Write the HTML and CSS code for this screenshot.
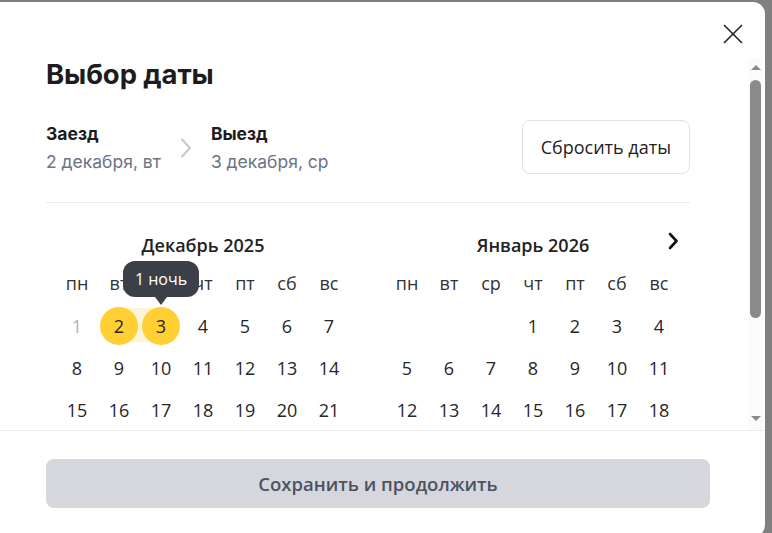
FILE: index.html
```html
<!DOCTYPE html>
<html lang="ru">
<head>
<meta charset="utf-8">
<title>Выбор даты</title>
<link rel="stylesheet" href="styles.css">
</head>
<body>
<div class="modal">
  <div class="modal-head">
    <button class="close" aria-label="Закрыть">
      <svg width="20" height="20" viewBox="0 0 20 20"><path d="M1 1L19 19M19 1L1 19" stroke="#222" stroke-width="1.6" fill="none"/></svg>
    </button>
  </div>
  <div class="scroll">
    <div class="scroll-content">
      <h1 class="title">Выбор даты</h1>
      <div class="dates-row">
        <div class="date-block">
          <div class="date-label">Заезд</div>
          <div class="date-value">2 декабря, вт</div>
        </div>
        <svg class="date-chevron" width="12" height="20" viewBox="0 0 12 20"><path d="M2 1.5L10 10L2 18.5" stroke="#c3c7ce" stroke-width="2" fill="none" stroke-linecap="round" stroke-linejoin="round"/></svg>
        <div class="date-block">
          <div class="date-label">Выезд</div>
          <div class="date-value">3 декабря, ср</div>
        </div>
        <button class="reset">Сбросить даты</button>
      </div>
      <div class="divider"></div>
      <div class="months">
        <div class="month">
          <div class="month-head"><span></span><span class="month-name">Декабрь 2025</span><span></span></div>
          <div class="days">
            <span class="wd">пн</span><span class="wd">вт</span><span class="wd">ср</span><span class="wd">чт</span><span class="wd">пт</span><span class="wd">сб</span><span class="wd">вс</span>
            <span class="day past">1</span>
            <span class="day range-start"><span class="sel">2</span></span>
            <span class="day range-end"><span class="sel">3</span><span class="tip">1 ночь</span></span>
            <span class="day">4</span><span class="day">5</span><span class="day">6</span><span class="day">7</span>
            <span class="day">8</span><span class="day">9</span><span class="day">10</span><span class="day">11</span><span class="day">12</span><span class="day">13</span><span class="day">14</span>
            <span class="day">15</span><span class="day">16</span><span class="day">17</span><span class="day">18</span><span class="day">19</span><span class="day">20</span><span class="day">21</span>
            <span class="day">22</span><span class="day">23</span><span class="day">24</span><span class="day">25</span><span class="day">26</span><span class="day">27</span><span class="day">28</span>
            <span class="day">29</span><span class="day">30</span><span class="day">31</span>
          </div>
        </div>
        <div class="month">
          <div class="month-head"><span></span><span class="month-name">Январь 2026</span>
            <svg class="next" width="12" height="18" viewBox="0 0 12 18"><path d="M3 2L9.5 9L3 16" stroke="#111" stroke-width="2.6" fill="none" stroke-linecap="round" stroke-linejoin="round"/></svg>
          </div>
          <div class="days">
            <span class="wd">пн</span><span class="wd">вт</span><span class="wd">ср</span><span class="wd">чт</span><span class="wd">пт</span><span class="wd">сб</span><span class="wd">вс</span>
            <span class="day"></span><span class="day"></span><span class="day"></span>
            <span class="day">1</span><span class="day">2</span><span class="day">3</span><span class="day">4</span>
            <span class="day">5</span><span class="day">6</span><span class="day">7</span><span class="day">8</span><span class="day">9</span><span class="day">10</span><span class="day">11</span>
            <span class="day">12</span><span class="day">13</span><span class="day">14</span><span class="day">15</span><span class="day">16</span><span class="day">17</span><span class="day">18</span>
            <span class="day">19</span><span class="day">20</span><span class="day">21</span><span class="day">22</span><span class="day">23</span><span class="day">24</span><span class="day">25</span>
            <span class="day">26</span><span class="day">27</span><span class="day">28</span><span class="day">29</span><span class="day">30</span><span class="day">31</span>
          </div>
        </div>
      </div>
    </div>
    <div class="scrollbar">
      <div class="sb-btn"><span class="tri-up"></span></div>
      <div class="sb-thumb"></div>
      <div class="sb-track"></div>
      <div class="sb-btn"><span class="tri-down"></span></div>
    </div>
  </div>
  <div class="footer">
    <button class="save">Сохранить и продолжить</button>
  </div>
</div>
</body>
</html>
```
FILE: styles.css
```css
* { box-sizing: border-box; }
html, body { margin: 0; padding: 0; }
body {
  background: #808080;
  width: 772px;
  height: 533px;
  overflow: hidden;
  font-family: "Open Sans", "Liberation Sans", sans-serif;
  color: #222;
}
button { font-family: inherit; cursor: pointer; }

.modal {
  margin-top: 2px;
  width: 765px;
  height: 535px;
  background: #fff;
  border-radius: 0 12px 12px 0;
  display: flex;
  flex-direction: column;
  overflow: hidden;
}

.modal-head {
  height: 56px;
  flex: none;
  display: flex;
  justify-content: flex-end;
  align-items: flex-start;
  padding: 22px 22px 0 0;
}
.close {
  border: 0;
  background: none;
  padding: 0;
  width: 20px;
  height: 20px;
  display: block;
}
.close svg { display: block; }

.scroll {
  height: 373px;
  flex: none;
  display: flex;
  border-bottom: 1px solid #ececec;
}
.scroll-content {
  flex: 1;
  overflow: hidden;
  padding: 0 58px 0 46px;
}

.title {
  margin: 0;
  font-family: Inter, "Noto Sans", sans-serif;
  font-weight: 700;
  font-size: 27.5px;
  line-height: 32px;
  color: #1c1c1e;
  letter-spacing: -0.1px;
}

.dates-row {
  margin-top: 30px;
  display: flex;
  align-items: center;
  height: 54px;
}
.date-block { display: flex; flex-direction: column; padding-top: 1px; }
.date-label {
  font-family: Inter, "Noto Sans", sans-serif;
  font-weight: 700;
  font-size: 17.5px;
  line-height: 24px;
  color: #1c1c1e;
}
.date-value {
  font-family: Inter, "Noto Sans", sans-serif;
  font-weight: 400;
  font-size: 17.5px;
  line-height: 24px;
  margin-top: 4px;
  color: #6b7384;
}
.date-chevron { margin: 2px 19px 0 19px; flex: none; }
.reset {
  margin-left: auto;
  height: 54px;
  padding: 0 18px;
  border: 1px solid #dfe1e5;
  border-radius: 8px;
  background: #fff;
  font-size: 18px;
  color: #222;
}

.divider {
  margin-top: 28px;
  height: 1px;
  background: #ebebeb;
}

.months {
  margin-top: 30px;
  display: flex;
  justify-content: space-between;
  padding: 0 10px;
}
.month { width: 294px; }
.month-head {
  height: 29px;
  display: grid;
  grid-template-columns: 1fr auto 1fr;
  align-items: start;
}
.month-name {
  font-size: 18px;
  line-height: 24px;
  font-weight: 600;
  color: #222;
}
.next { justify-self: end; margin-right: 1px; margin-top: -1px; }

.days {
  display: grid;
  grid-template-columns: repeat(7, 42px);
  grid-auto-rows: 42px;
}
.wd, .day {
  display: flex;
  align-items: center;
  justify-content: center;
  font-size: 18px;
  color: #262626;
}
.wd { color: #333; }
.day { position: relative; padding-top: 1px; }
.day.past { color: #b3b3b3; }
.sel {
  width: 38px;
  height: 38px;
  border-radius: 50%;
  background: #ffcf33;
  display: flex;
  align-items: center;
  justify-content: center;
  position: relative;
  z-index: 1;
}
.range-start {
  background: linear-gradient(to right, transparent 50%, #fdf4d8 50%) center / 100% 34px no-repeat;
}
.range-end {
  background: linear-gradient(to right, #fdf4d8 50%, transparent 50%) center / 100% 34px no-repeat;
}
.tip {
  position: absolute;
  left: 50%;
  bottom: calc(100% + 7px);
  transform: translateX(-50%);
  width: 76px;
  height: 36px;
  border-radius: 12px;
  background: #3a3f48;
  color: #fff;
  font-size: 16px;
  display: flex;
  align-items: center;
  justify-content: center;
  white-space: nowrap;
  z-index: 2;
}
.tip::after {
  content: "";
  position: absolute;
  top: 100%;
  left: 50%;
  margin-left: -6px;
  border-left: 6px solid transparent;
  border-right: 6px solid transparent;
  border-top: 8px solid #3a3f48;
}

.scrollbar {
  width: 15px;
  flex: none;
  margin-right: 2px;
  background: #fbfbfb;
  display: flex;
  flex-direction: column;
  align-items: center;
  padding-bottom: 3px;
}
.sb-btn {
  height: 18px;
  flex: none;
  display: flex;
  align-items: center;
  justify-content: center;
  width: 100%;
}
.tri-up {
  border-left: 5px solid transparent;
  border-right: 5px solid transparent;
  border-bottom: 5px solid #8a8a8a;
}
.tri-down {
  border-left: 5px solid transparent;
  border-right: 5px solid transparent;
  border-top: 5px solid #8a8a8a;
}
.sb-thumb {
  margin-top: 4px;
  width: 11px;
  height: 238px;
  border-radius: 6px;
  background: #8b8b8b;
  flex: none;
}
.sb-track { flex: 1; }

.footer {
  flex: 1;
  padding: 28px 55px 0 46px;
}
.save {
  width: 100%;
  height: 49px;
  border: 0;
  border-radius: 8px;
  background: #d5d7dc;
  font-size: 18.5px;
  font-weight: 600;
  color: #4b5362;
}
```
